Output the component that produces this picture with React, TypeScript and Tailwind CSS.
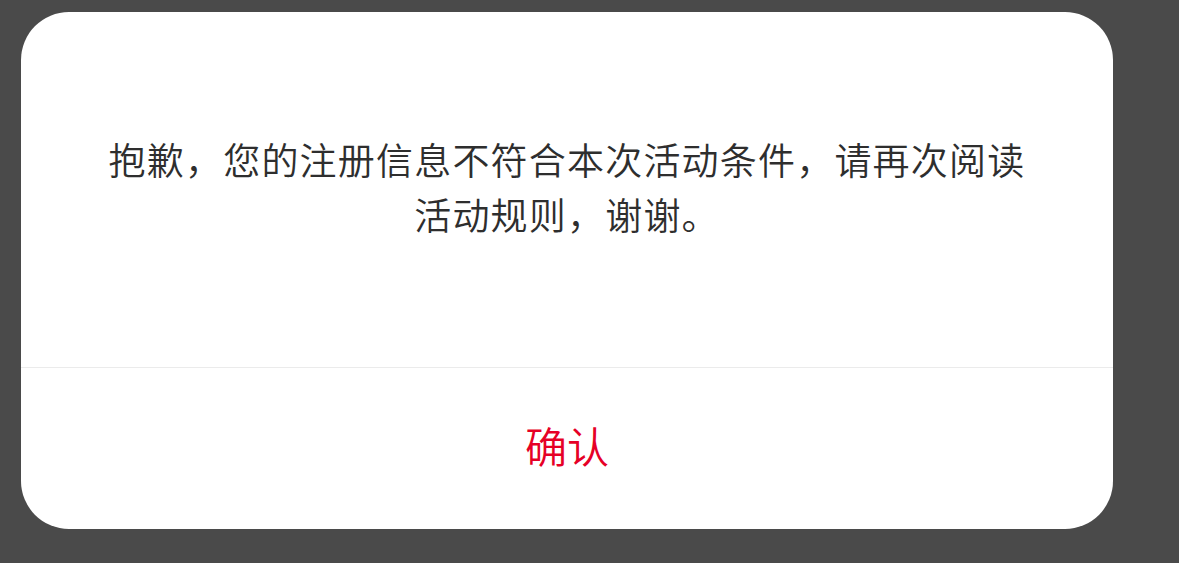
import React from "react";

export default function App() {
  return (
    <div
      className="w-[1179px] h-[563px] bg-[#4a4a4a] pt-[12px] pl-[21px] overflow-hidden"
      style={{ fontFamily: '"Noto Sans CJK SC", "Noto Sans", sans-serif' }}
    >
      <div className="w-[1092px] h-[517px] bg-white rounded-[48px] flex flex-col overflow-hidden">
        <div className="h-[355px] flex items-center justify-center px-[78px] pb-[5px]">
          <p className="text-[37px] leading-[55px] tracking-[1.2px] font-[350] text-[#2e2e2e] text-center">
            抱歉，您的注册信息不符合本次活动条件，请再次阅读活动规则，谢谢。
          </p>
        </div>
        <div className="h-[1px] bg-[#ebebeb]" />
        <button className="flex-1 flex items-center justify-center text-[42px] font-[350] text-[#e60026] pb-[9px]">
          确认
        </button>
      </div>
    </div>
  );
}
